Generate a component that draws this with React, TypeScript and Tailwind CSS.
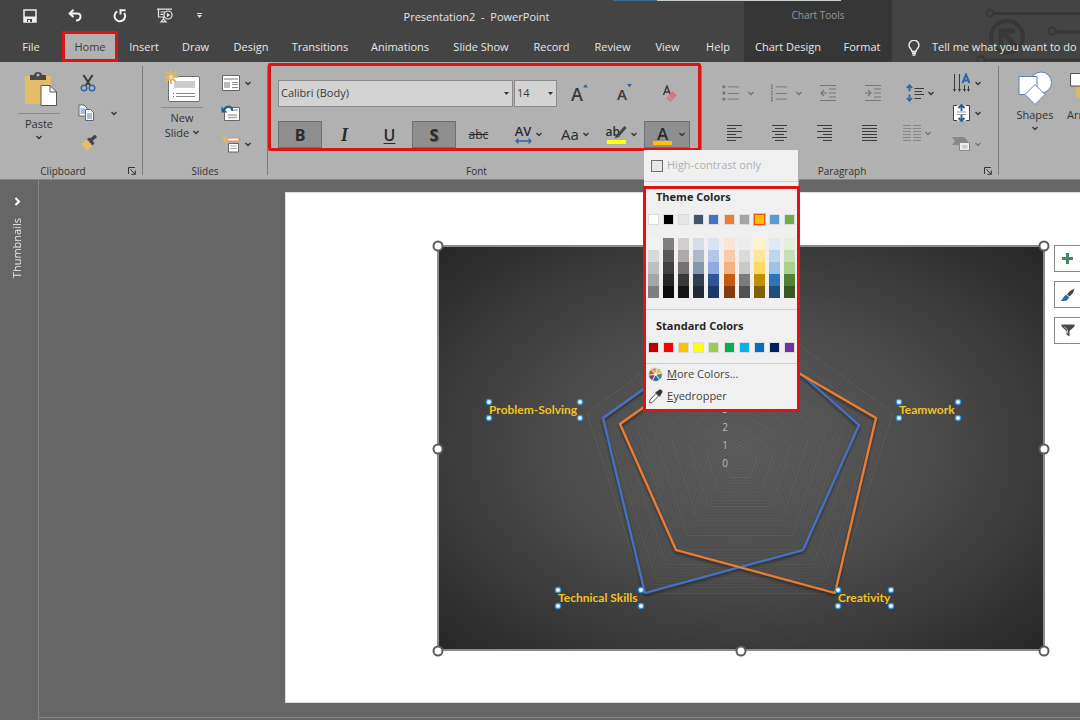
import React from "react";

const TABS = [
  { label: "File", width: "w-[62px]" },
  { label: "Home", width: "w-14" },
  { label: "Insert", width: "w-[52px]" },
  { label: "Draw", width: "w-[51px]" },
  { label: "Design", width: "w-[60px]" },
  { label: "Transitions", width: "w-[78px]" },
  { label: "Animations", width: "w-[82px]" },
  { label: "Slide Show", width: "w-20" },
  { label: "Record", width: "w-[61px]" },
  { label: "Review", width: "w-[61px]" },
  { label: "View", width: "w-[49px]" },
  { label: "Help", width: "w-[52px]" },
];

const THEME = ["#ffffff", "#000000", "#e7e6e6", "#44546a", "#4472c4", "#ed7d31", "#a5a5a5", "#ffc000", "#5b9bd5", "#70ad47"];

const SHADES = [
  ["#f2f2f2", "#d9d9d9", "#bfbfbf", "#a6a6a6", "#7f7f7f"],
  ["#7f7f7f", "#595959", "#404040", "#262626", "#0d0d0d"],
  ["#d0cece", "#aeaaaa", "#767171", "#3b3838", "#181717"],
  ["#d6dce5", "#adb9ca", "#8497b0", "#333f50", "#222a35"],
  ["#dae3f3", "#b4c7e7", "#8faadc", "#2f5597", "#203864"],
  ["#fbe5d6", "#f8cbad", "#f4b183", "#c55a11", "#843c0c"],
  ["#ededed", "#dbdbdb", "#c9c9c9", "#7c7c7c", "#525252"],
  ["#fff2cc", "#ffe699", "#ffd966", "#bf9000", "#7f6000"],
  ["#deebf7", "#bdd7ee", "#9dc3e6", "#2e75b6", "#1f4e79"],
  ["#e2f0d9", "#c5e0b4", "#a9d18e", "#548235", "#385723"],
];

const STANDARD = ["#c00000", "#ff0000", "#ffc000", "#ffff00", "#92d050", "#00b050", "#00b0f0", "#0070c0", "#002060", "#7030a0"];

function Chevron({ dim = false }: { dim?: boolean }) {
  return (
    <svg width="6" height="5" viewBox="0 0 6 5" className="shrink-0" aria-hidden="true">
      <path d="M0.5 1 L3 3.5 L5.5 1" fill="none" stroke={dim ? "#777" : "#333"} strokeWidth="1.3" />
    </svg>
  );
}

function Launcher({ name }: { name: string }) {
  return (
    <button aria-label={name} className="flex size-3 items-center justify-center">
      <svg width="8" height="8" viewBox="0 0 8 8" fill="none" stroke="#333" aria-hidden="true">
        <path d="M0.5 7V0.5H7M2.5 2.5L7 7M7.3 3.5V7.3H3.5" />
      </svg>
    </button>
  );
}

function Group({
  name,
  className,
  labelClassName = "",
  launcher,
  children,
}: {
  name: string;
  className: string;
  labelClassName?: string;
  launcher?: boolean;
  children: React.ReactNode;
}) {
  return (
    <section aria-label={name} className={`relative flex shrink-0 flex-col ${className}`}>
      <div className="h-[102px]">{children}</div>
      <div className="flex h-4 items-center text-[10px]">
        <span className={`flex-1 text-center ${labelClassName}`}>{name}</span>
        {launcher && (
          <span className="pr-1">
            <Launcher name={`${name} settings`} />
          </span>
        )}
      </div>
    </section>
  );
}

function Divider() {
  return <div className="mt-1 mb-1 w-px shrink-0 bg-[#7b7b7b]" />;
}

function IconButton({ name, className, children, arrow, dim }: { name: string; className: string; children?: React.ReactNode; arrow?: boolean; dim?: boolean }) {
  return (
    <button aria-label={name} className={`flex shrink-0 items-center justify-center gap-1 ${className}`}>
      {children}
      {arrow && <Chevron dim={dim} />}
    </button>
  );
}

function Header() {
  return (
    <header className="flex h-[62px] bg-[#444] text-[#e6e6e6]">
      <div className="relative flex shrink-0 flex-col">
        <div className="flex h-[31px] items-center pl-2">
          <IconButton name="Save" className="w-11">
            <svg width="14" height="14" viewBox="0 0 14 14" aria-hidden="true">
              <path d="M1 1H13V13H1Z" fill="none" stroke="#eee" strokeWidth="1.5" />
              <path d="M1 7.5H13V13H1Z" fill="#eee" />
              <path d="M4 10H9V13H4Z" fill="#444" />
              <path d="M5 11H7V13H5Z" fill="#eee" />
            </svg>
          </IconButton>
          <IconButton name="Undo" className="w-[46px]">
            <svg width="14" height="13" viewBox="0 0 14 13" fill="none" stroke="#f2f2f2" strokeWidth="2" aria-hidden="true">
              <path d="M5.5 0.8L1.6 4.4L5.5 8M2 4.4H9.2C14 4.4 13.6 11.2 8 11.6" />
            </svg>
          </IconButton>
          <IconButton name="Redo" className="w-[43px]">
            <svg width="14" height="14" viewBox="0 0 14 14" fill="none" stroke="#f2f2f2" strokeWidth="2" aria-hidden="true">
              <path d="M4.2 2.4A5.3 5.3 0 1 0 11.2 4M7.5 5.5V1.2H12.6" />
            </svg>
          </IconButton>
          <IconButton name="Start From Beginning" className="w-12">
            <svg width="16" height="15" viewBox="0 0 16 15" fill="none" stroke="#e4e4e4" strokeWidth="1.2" aria-hidden="true">
              <path d="M0 1.2H15M1.5 1.5V9H7M3.5 4H8M3.5 6.3H6.5M6.5 9V12M4 13.8L6.5 11L9 13.8Z" />
              <circle cx="11" cy="7" r="4" fill="#444" />
              <path d="M9.8 4.8L13.2 7L9.8 9.2Z" fill="#e4e4e4" stroke="none" />
            </svg>
          </IconButton>
          <IconButton name="Customize Quick Access Toolbar" className="w-5">
            <svg width="5" height="5" viewBox="0 0 5 5" fill="#ddd" aria-hidden="true">
              <path d="M0 0H5V1H0ZM0 2H5L2.5 5Z" />
            </svg>
          </IconButton>
          <h1 className="flex-1 pt-1 text-center">Presentation2&nbsp; -&nbsp; PowerPoint</h1>
        </div>
        <nav className="flex h-[31px]" aria-label="Ribbon tabs">
          {TABS.map((t) =>
            t.label === "Home" ? (
              <button key={t.label} className={`${t.width} border-[3px] border-[#dc1414] bg-[#b1b1b1] pt-[2px] text-[#3c3c3c]`}>
                {t.label}
              </button>
            ) : (
              <button key={t.label} className={`${t.width} pt-[2px]`}>
                {t.label}
              </button>
            )
          )}
        </nav>
      </div>
      <div className="flex shrink-0 flex-col bg-[#363636]">
        <div className="flex h-[31px] items-center justify-center text-[10px] text-[#969696]">Chart Tools</div>
        <nav className="flex h-[31px]" aria-label="Chart tabs">
          <button className="w-[88px] pt-[2px]">Chart Design</button>
          <button className="w-[60px] pt-[2px]">Format</button>
        </nav>
      </div>
      <div className="relative flex flex-1 items-end overflow-hidden">
        <svg className="absolute inset-y-0 left-[84px]" width="120" height="62" fill="none" stroke="#383838" aria-hidden="true">
          <circle cx="14" cy="13" r="3.5" strokeWidth="2" />
          <path d="M18 13.5H120M80 32H120M8 60H110" strokeWidth="3" />
          <circle cx="76" cy="31" r="3.5" strokeWidth="2" />
          <circle cx="31" cy="37" r="16" strokeWidth="4" />
          <path d="M25 45V31H39M26 32L40 46" strokeWidth="5" />
          <circle cx="5" cy="60" r="3.5" strokeWidth="2" />
        </svg>
        <button className="relative flex h-[31px] items-center gap-3 pt-[2px] pl-4 whitespace-nowrap">
          <svg width="12" height="16" viewBox="0 0 12 16" fill="none" stroke="#eee" strokeWidth="1.4" aria-hidden="true">
            <path d="M4 11.5C4 9 1 8.5 1 5.3A5 5 0 0 1 11 5.3C11 8.5 8 9 8 11.5ZM4 13.2H8M4.5 15H7.5" />
          </svg>
          Tell me what you want to do
        </button>
      </div>
    </header>
  );
}

function ClipboardGroup() {
  return (
    <Group name="Clipboard" className="w-[142px]" launcher>
      <div className="flex h-full">
        <button className="ml-[18px] flex w-[42px] flex-col items-center pt-[9px]">
          <svg className="ml-1" width="34" height="36" viewBox="0 0 34 36" aria-hidden="true">
            <path d="M1 5H27V33H1Z" fill="#e6bd67" />
            <path d="M6 9V4H10C10 0 18 0 18 4H22V9Z" fill="#484848" />
            <circle cx="14" cy="4" r="1.5" fill="#b1b1b1" />
            <path d="M17 14.5H26L32.5 21V34.5H17Z" fill="#fff" stroke="#555" />
            <path d="M26 14.5V21H32.5" fill="none" stroke="#555" />
          </svg>
          <span className="mt-[6px] h-px w-full bg-[#8a8a8a]" />
          <span className="mt-[2px] h-[15px] leading-[15px]">Paste</span>
          <span className="mt-1">
            <Chevron />
          </span>
        </button>
        <div className="ml-[14px] flex flex-col pt-[6px]">
          <IconButton name="Cut" className="h-[30px] w-7">
            <svg width="16" height="18" viewBox="0 0 16 18" fill="none" aria-hidden="true">
              <path d="M3.5 1L10.5 12M12.5 1L5.5 12" stroke="#3a3a3a" strokeWidth="2" />
              <circle cx="4" cy="14" r="2.8" stroke="#2f66a8" strokeWidth="1.4" />
              <circle cx="12" cy="14" r="2.8" stroke="#2f66a8" strokeWidth="1.4" />
            </svg>
          </IconButton>
          <div className="flex h-[30px] items-center">
            <IconButton name="Copy" className="w-6">
              <svg width="17" height="18" viewBox="0 0 17 18" aria-hidden="true">
                <path d="M1 1H6L9 4V12H1Z" fill="#fff" stroke="#666" />
                <path d="M2.5 5H7M2.5 7H7M2.5 9H7" stroke="#4a80bd" />
                <path d="M7.500 5.500H12.500L15.500 8.500V16.500H7.500Z" fill="#fff" stroke="#666" />
                <path d="M9 10H14M9 12H14M9 14H14" stroke="#4a80bd" />
              </svg>
            </IconButton>
            <IconButton name="Copy options" className="ml-1 w-6" arrow />
          </div>
          <IconButton name="Format Painter" className="h-[30px] w-[30px]">
            <svg width="18" height="16" viewBox="0 0 18 16" aria-hidden="true">
              <path d="M1 9L6 5L12 11L7 16Z" fill="#e6bd67" />
              <path d="M7 4L9.500 2.500L14.500 8L12.500 10.500Z" fill="#444" />
              <path d="M11 5L16 1" stroke="#444" strokeWidth="3.500" />
            </svg>
          </IconButton>
        </div>
      </div>
    </Group>
  );
}

function SlidesGroup() {
  return (
    <Group name="Slides" className="w-[124px]">
      <div className="flex h-full">
        <button className="ml-[18px] flex w-[42px] flex-col items-center pt-[8px]">
          <svg width="38" height="33" viewBox="0 0 38 33" aria-hidden="true">
            <rect x="5.500" y="6.500" width="31" height="25" rx="1.500" fill="#fff" stroke="#707070" />
            <path d="M11 11H32V18H11Z" fill="#ccc" />
            <path d="M13 23.500H32M13 26.500H32" stroke="#888" />
            <path d="M10 23.500H11M10 26.500H11" stroke="#666" />
            <path d="M8 0V14M1 7H15M3 2L13 12M13 2L3 12" stroke="#e0b868" strokeWidth="2" />
            <circle cx="8" cy="7" r="2" fill="#f3d9a0" />
          </svg>
          <span className="mt-1 h-px w-full bg-[#8a8a8a]" />
          <span className="mt-[2px] h-[15px] leading-[15px]">New</span>
          <span className="flex h-[15px] items-center gap-1 leading-[15px]">
            Slide <Chevron />
          </span>
        </button>
        <div className="ml-[18px] flex flex-col items-start pt-[6px]">
          <IconButton name="Layout" className="h-[30px]" arrow>
            <svg width="20" height="16" viewBox="0 0 20 16" aria-hidden="true">
              <path d="M1.500 0.500H18.500V15.500H1.500Z" fill="#fff" stroke="#666" />
              <path d="M3 3H17V5H3ZM3 7H9V13H3Z" fill="#bbb" />
              <path d="M11 7.500H17M11 9.500H17M11 12.500H17" stroke="#888" />
            </svg>
          </IconButton>
          <IconButton name="Reset" className="h-[30px]">
            <svg width="20" height="16" viewBox="0 0 20 16" aria-hidden="true">
              <path d="M3.500 2.500H18.500V15.500H3.500Z" fill="#fff" stroke="#666" />
              <path d="M7 10H16M7 12.500H16M13 5H17" stroke="#aaa" strokeWidth="1.500" />
              <path d="M3 5C6 0 11 1 11.500 6" fill="none" stroke="#245a96" strokeWidth="2.200" />
              <path d="M0.500 1.500V7.500H6.500Z" fill="#245a96" />
            </svg>
          </IconButton>
          <IconButton name="Section" className="h-8" arrow>
            <svg width="20" height="18" viewBox="0 0 20 18" aria-hidden="true">
              <path d="M6 3H18V6H6Z" fill="#fff" stroke="#e08a4a" />
              <path d="M7.500 8.500H17.500V17H7.500Z" fill="#fff" stroke="#666" />
              <path d="M9 11H16M9 13.500H16" stroke="#aaa" />
              <path d="M4 0V8M0 4H8M1 1L7 7M7 1L1 7" stroke="#e0b868" />
            </svg>
          </IconButton>
        </div>
      </div>
    </Group>
  );
}

function Swatch({ color, selected }: { color: string; selected?: boolean }) {
  return (
    <button
      aria-label={color}
      className={`size-[11px] border ${selected ? "border-[#e8501c] ring-1 ring-[#f0b090]" : "border-[#dcdcdc]"}`}
      style={{ backgroundColor: color }}
    />
  );
}

function ColorMenu() {
  return (
    <div className="absolute top-[29px] left-0 z-10 w-[154px] bg-[#f0f0f0] text-[#444] shadow-[1px_0_0_#aaa]">
      <label className="flex h-[31px] items-center gap-1 pl-[7px] whitespace-nowrap text-[#b0b0b0]">
        <input type="checkbox" disabled className="size-3 appearance-none border border-[#6f6f6f] bg-[#e8e8e8]" />
        High-contrast only
      </label>
      <div className="h-[5px] border-t border-[#cfcfcf]" />
      <div className="-mr-[2px] -ml-[1px] border-[3px] border-[#dc1414]">
        <h2 className="h-4 pl-[10px] text-[11px] leading-4 font-bold text-[#262626]">Theme Colors</h2>
        <div className="mt-[9px] flex justify-between px-[2px]">
          {THEME.map((c) => (
            <Swatch key={c} color={c} selected={c === "#ffc000"} />
          ))}
        </div>
        <div className="mt-[13px] flex justify-between px-[2px]">
          {SHADES.map((col) => (
            <div key={col[3]} className="flex w-[11px] flex-col">
              {col.map((c) => (
                <button key={c} aria-label={c} className="h-3" style={{ backgroundColor: c }} />
              ))}
            </div>
          ))}
        </div>
        <div className="mt-[11px] h-px bg-[#cfcfcf]" />
        <h2 className="mt-2 h-4 pl-[10px] text-[11px] leading-4 font-bold text-[#262626]">Standard Colors</h2>
        <div className="mt-2 flex justify-between px-[2px]">
          {STANDARD.map((c) => (
            <Swatch key={c} color={c} />
          ))}
        </div>
        <div className="mt-[10px] h-px bg-[#cfcfcf]" />
        <div className="flex h-[45px] flex-col">
          <button className="flex h-5 items-center gap-1 pl-[2px]">
            <svg width="15" height="15" viewBox="-8 -8 16 16" stroke="#f0f0f0" strokeWidth="0.800" aria-hidden="true">
              <path d="M0 0L-5 -5.500A7.400 7.400 0 0 1 2 -7.100Z" fill="#d8a060" />
              <path d="M0 0L2 -7.100A7.400 7.400 0 0 1 7.200 -1.500Z" fill="#e8b868" />
              <path d="M0 0L7.200 -1.500A7.400 7.400 0 0 1 4.500 5.900Z" fill="#3f8f78" />
              <path d="M0 0L4.500 5.900A7.400 7.400 0 0 1 -3.500 6.500Z" fill="#2c6aa8" />
              <path d="M0 0L-3.500 6.500A7.400 7.400 0 0 1 -7.400 0.500Z" fill="#8a3f4c" />
              <path d="M0 0L-7.400 0.500A7.400 7.400 0 0 1 -5 -5.500Z" fill="#c85a38" />
              <circle r="1.600" fill="#f0f0f0" stroke="none" />
            </svg>
            <span>
              <u>M</u>ore Colors...
            </span>
          </button>
          <button className="flex h-6 items-center gap-1 pl-[2px]">
            <svg width="15" height="15" viewBox="0 0 15 15" aria-hidden="true">
              <path d="M8 4.500L10.500 7L4 13.500L1.500 14L2 11Z" fill="#fff" stroke="#555" />
              <path d="M7 3L9 2.500L11 0.800C13 -0.500 15.500 2 14 4L12.500 6L12 8Z" fill="#333" />
            </svg>
            <span>
              <u>E</u>yedropper
            </span>
          </button>
        </div>
      </div>
    </div>
  );
}

function Combo({ label, value, className }: { label: string; value: string; className: string }) {
  return (
    <div className={`relative flex h-[27px] items-center ${className}`}>
      <select aria-label={label} className="h-full w-full appearance-none border border-[#8a8a8a] bg-[#d3d3d3] pl-[2px] text-[#3a3a3a]">
        <option>{value}</option>
      </select>
      <svg className="pointer-events-none absolute right-[4px]" width="5" height="3" viewBox="0 0 5 3" aria-hidden="true">
        <path d="M0 0H5L2.500 3Z" fill="#333" />
      </svg>
    </div>
  );
}

function FontGroup() {
  return (
    <Group name="Font" className="w-[433px]" labelClassName="pr-4">
      <div className="mt-[1px] flex h-[88px] flex-col rounded-[2px] border-[3px] border-[#dc1414] pt-[14px] pl-[7px]">
        <div className="flex h-[27px] shrink-0 items-center">
          <Combo label="Font name" value="Calibri (Body)" className="w-[235px]" />
          <Combo label="Font size" value="14" className="ml-px w-[43px]" />
          <IconButton name="Increase font size" className="w-[45px]">
            <span className="flex items-start text-[18px] leading-5 font-semibold text-[#3a3a3a]">
              A
              <svg width="5" height="4" viewBox="0 0 5 4" aria-hidden="true">
                <path d="M0 3.500L2.500 0L5 3.500Z" fill="#2f66a8" />
              </svg>
            </span>
          </IconButton>
          <IconButton name="Decrease font size" className="w-[45px]">
            <span className="flex items-start text-[15px] leading-5 font-semibold text-[#3a3a3a]">
              A
              <svg width="5" height="4" viewBox="0 0 5 4" aria-hidden="true">
                <path d="M0 0H5L2.500 3.500Z" fill="#2f66a8" />
              </svg>
            </span>
          </IconButton>
          <IconButton name="Clear formatting" className="w-[45px]">
            <svg width="16" height="18" viewBox="0 0 16 18" aria-hidden="true">
              <path d="M1.500 10L5 1L8.500 10M2.700 7H7.300" fill="none" stroke="#3a3a3a" strokeWidth="1.500" />
              <path d="M4 13L10.500 6L15 10L8.500 17Z" fill="#e0727f" />
              <path d="M6 11L10.500 15" stroke="#b1b1b1" />
            </svg>
          </IconButton>
        </div>
        <div className="mt-[14px] flex h-[27px] shrink-0 items-stretch text-[#2b2b2b]">
          <button className="w-11 border border-[#707070] bg-[#8f8f8f] text-[16px] leading-6 font-bold">B</button>
          <button className="w-[45px] font-['Liberation_Serif',serif] text-[18px] leading-6 font-bold italic">I</button>
          <button className="w-[45px] text-[16px] leading-6 font-semibold underline underline-offset-2">U</button>
          <button className="w-11 border border-[#707070] bg-[#8f8f8f] text-[16px] leading-6 font-bold text-shadow-[1px_1px_1px_#555]">S</button>
          <button className="w-[45px] text-[12px] font-medium line-through">abc</button>
          <IconButton name="Character spacing" className="ml-2 w-[38px]" arrow>
            <span className="flex flex-col items-center text-[13px] leading-[13px] font-semibold">
              AV
              <svg width="17" height="6" viewBox="0 0 17 6" fill="none" stroke="#2f66a8" strokeWidth="1.300" aria-hidden="true">
                <path d="M1 3H16M3.500 0.500L1 3L3.500 5.500M13.500 0.500L16 3L13.500 5.500" />
              </svg>
            </span>
          </IconButton>
          <IconButton name="Change case" className="ml-2 w-10" arrow>
            <span className="text-[15px]">Aa</span>
          </IconButton>
          <IconButton name="Text highlight color" className="ml-[7px] w-[38px]" arrow>
            <span className="relative flex flex-col items-center text-[12px] leading-[14px] font-semibold">
              <span className="h-[15px] w-[21px] text-left">ab</span>
              <span className="h-1 w-[19px] bg-[#ffff10]" />
              <svg className="absolute top-0 right-0" width="15" height="15" viewBox="0 0 15 15" aria-hidden="true">
                <path d="M13.500 2L6.500 10" stroke="#444" strokeWidth="3" />
                <path d="M5 8.500L8 11.500L2.500 13.500Z" fill="#444" />
              </svg>
            </span>
          </IconButton>
          <div className="relative ml-1 flex w-[46px]">
            <IconButton name="Font color" className="w-full gap-[7px] border border-[#707070] bg-[#8f8f8f] pl-1" arrow>
              <span className="flex flex-col items-center text-[17px] leading-[17px] font-semibold">
                <span className="h-4">A</span>
                <span className="h-1 w-[19px] bg-[#ffc000]" />
              </span>
            </IconButton>
            <ColorMenu />
          </div>
        </div>
      </div>
    </Group>
  );
}

function Lines({ d, color = "#3c3c3c" }: { d: string; color?: string }) {
  return (
    <svg width="18" height="18" viewBox="0 0 18 18" fill="none" stroke={color} strokeWidth="1.200" aria-hidden="true">
      <path d={d} />
    </svg>
  );
}

function ParagraphGroup() {
  return (
    <Group name="Paragraph" className="w-[296px]" launcher>
      <div className="flex h-full">
        <div className="flex w-[240px] flex-col pt-[16px]">
          <div className="flex h-[30px] items-center">
            <IconButton name="Bullets" className="ml-5 w-[32px] gap-[9px]" arrow dim>
              <svg width="18" height="18" viewBox="0 0 18 18" stroke="#777" aria-hidden="true">
                <path d="M6 2.500H18M6 9.500H18M6 15.500H18" />
                <path d="M0.500 2.500H3.500M0.500 9H3.500M0.500 15.500H3.500" strokeWidth="3" />
              </svg>
            </IconButton>
            <IconButton name="Numbering" className="ml-[16px] w-[32px] gap-[9px]" arrow dim>
              <svg width="18" height="18" viewBox="0 0 18 18" stroke="#777" aria-hidden="true">
                <path d="M6 2.500H18M6 9.500H18M6 15.500H18" />
                <path d="M2 0V5M2 6.500V11.500M2 13V18" strokeWidth="1.800" strokeDasharray="2 1" />
              </svg>
            </IconButton>
            <IconButton name="Decrease indent" className="ml-[14px] w-6">
              <Lines color="#777" d="M1 1.500H17M10 5H17M10 9H17M10 13H17M1 16.500H17M8 9H2M5 6L2 9L5 12" />
            </IconButton>
            <IconButton name="Increase indent" className="ml-[21px] w-6">
              <Lines color="#777" d="M1 1.500H17M10 5H17M10 9H17M10 13H17M1 16.500H17M1 9H7M4 6L7 9L4 12" />
            </IconButton>
            <IconButton name="Line spacing" className="ml-[20px] w-[30px]" arrow>
              <svg width="18" height="18" viewBox="0 0 18 18" fill="none" aria-hidden="true">
                <path d="M3.500 1V7.500M0.800 4L3.500 1.200L6.200 4M3.500 10.500V17M0.800 14L3.500 16.800L6.200 14" stroke="#2f66a8" strokeWidth="1.800" />
                <path d="M8.500 4.500H18M8.500 7.500H16M8.500 10.500H18M8.500 14.500H15" stroke="#3c3c3c" />
              </svg>
            </IconButton>
          </div>
          <div className="mt-[10px] flex h-[30px] items-center">
            <IconButton name="Align left" className="ml-[10px] w-[45px]">
              <Lines d="M1 1.500H16M1 4.500H10M1 7.500H16M1 10.500H10M1 13.500H16M1 16.500H10" />
            </IconButton>
            <IconButton name="Center" className="w-[45px]">
              <Lines d="M1 1.500H16M4 4.500H13M1 7.500H16M4 10.500H13M1 13.500H16M4 16.500H13" />
            </IconButton>
            <IconButton name="Align right" className="w-[45px]">
              <Lines d="M1 1.500H16M7 4.500H16M1 7.500H16M7 10.500H16M1 13.500H16M7 16.500H16" />
            </IconButton>
            <IconButton name="Justify" className="w-[45px]">
              <Lines d="M1 1.500H16M1 4.500H16M1 7.500H16M1 10.500H16M1 13.500H16M1 16.500H16" />
            </IconButton>
            <IconButton name="Columns" className="ml-[10px] w-[30px]" arrow dim>
              <Lines color="#888" d="M0 1.500H8M10 1.500H18M0 4.500H8M10 4.500H18M0 7.500H8M10 7.500H18M0 10.500H8M10 10.500H18M0 13.500H8M10 13.500H18M0 16.500H8M10 16.500H18" />
            </IconButton>
          </div>
        </div>
        <div className="ml-[10px] flex flex-col items-start pt-[6px]">
          <IconButton name="Text direction" className="h-[30px]" arrow>
            <svg width="19" height="20" viewBox="0 0 19 20" fill="none" aria-hidden="true">
              <path d="M2.500 1V18M7.500 1V18M12.500 12V18M16.500 13V18" stroke="#3c3c3c" />
              <path d="M1 16L2.500 19L4 16ZM6 16L7.500 19L9 16ZM11 16L12.500 19L14 16ZM15 16L16.500 19L18 16Z" fill="#3c3c3c" />
              <path d="M10.500 10L14 1.500L17.500 10M11.500 7.500H16.500" stroke="#2f66a8" strokeWidth="2" />
            </svg>
          </IconButton>
          <IconButton name="Align text" className="h-[30px]" arrow>
            <svg width="19" height="18" viewBox="0 0 19 18" fill="none" aria-hidden="true">
              <path d="M1.500 1.500H17.500V16.500H1.500Z" fill="#fff" />
              <path d="M5 1.500H1.500V16.500H5M14 1.500H17.500V16.500H14" stroke="#444" />
              <path d="M5 8H14M5 10.500H14" stroke="#999" />
              <path d="M9.500 0.500V7M6.500 4L9.500 1L12.500 4M9.500 11V17.500M6.500 14L9.500 17L12.500 14" stroke="#2b5c98" strokeWidth="1.900" />
            </svg>
          </IconButton>
          <IconButton name="Convert to SmartArt" className="h-8" arrow dim>
            <svg width="19" height="16" viewBox="0 0 19 16" aria-hidden="true">
              <path d="M0 1H12L16 5L12 9H0L3 5Z" fill="#888" />
              <path d="M7.500 6.500H17.500V14.500H7.500Z" fill="#eee" stroke="#888" />
              <path d="M10 9H15.500V12.500H10Z" fill="#ccc" />
            </svg>
          </IconButton>
        </div>
      </div>
    </Group>
  );
}

function DrawingGroup() {
  return (
    <section aria-label="Drawing" className="flex pt-[9px] pl-4">
      <button className="flex w-10 shrink-0 flex-col items-center">
        <svg width="36" height="36" viewBox="0 0 36 36" fill="#fff" stroke="#5d83b4" aria-hidden="true">
          <circle cx="24" cy="11.500" r="10.500" />
          <path d="M2 5.500H20V23.500H2Z" />
          <path d="M18 13.500L28 23.500L18 33.500L8 23.500Z" />
        </svg>
        <span className="h-[15px] leading-[15px]">Shapes</span>
        <span className="mt-1">
          <Chevron />
        </span>
      </button>
      <button className="ml-3 flex shrink-0 flex-col items-center">
        <svg width="34" height="36" viewBox="0 0 34 36" aria-hidden="true">
          <path d="M14 8H30V27H6V15H14Z" fill="#e0b868" />
          <path d="M0.500 2.500H15V15H0.500Z" fill="#fff" stroke="#555" />
          <path d="M18 20H32V33H18Z" fill="#fff" stroke="#555" />
        </svg>
        <span className="h-[15px] leading-[15px]">Arrange</span>
      </button>
    </section>
  );
}

const CX = 303;
const CY = 217;
const RINGS = Array.from({ length: 45 }, (_, i) => {
  const r = ((i + 1) * 161) / 45;
  return [0, 1, 2, 3, 4]
    .map((k) => {
      const a = (k * 2 * Math.PI) / 5;
      return `${(CX + r * Math.sin(a)).toFixed(1)},${(CY - r * Math.cos(a)).toFixed(1)}`;
    })
    .join(" ");
});

const LABELS = [
  { text: "Problem-Solving", x: 52, y: 164, w: 91 },
  { text: "Teamwork", x: 462, y: 164, w: 59 },
  { text: "Technical Skills", x: 121, y: 352, w: 83 },
  { text: "Creativity", x: 401, y: 352, w: 53 },
];

const HANDLES = [
  [1, 0], [304, 0], [607, 0], [1, 203], [607, 203], [1, 405], [304, 405], [607, 405],
];

function RadarChart() {
  return (
    <svg width="606" height="405" viewBox="0 0 606 405" className="shrink-0 overflow-visible" role="img" aria-label="Radar chart">
      <defs>
        <radialGradient id="plate" cx="50%" cy="50%" r="70%">
          <stop offset="0" stopColor="#595959" />
          <stop offset="0.450" stopColor="#4b4b4b" />
          <stop offset="1" stopColor="#272727" />
        </radialGradient>
        <filter id="drop" x="-10%" y="-10%" width="120%" height="120%">
          <feDropShadow dx="0" dy="2" stdDeviation="1.500" floodColor="#000" floodOpacity="0.500" />
        </filter>
      </defs>
      <rect x="1" y="0" width="606" height="404" fill="url(#plate)" stroke="#8c8c8c" strokeWidth="2" />
      <g fill="none" stroke="#fff">
        {RINGS.map((p, i) => (
          <polygon key={p} points={p} strokeWidth="0.700" opacity={i % 5 === 4 ? 0.1 : 0.06} />
        ))}
      </g>
      <g fill="#b8b8b8" className="text-[10px]" textAnchor="middle">
        <text x="288" y="167">3</text>
        <text x="288" y="185">2</text>
        <text x="288" y="203">1</text>
        <text x="288" y="221">0</text>
      </g>
      <g fill="none" strokeWidth="2.200" strokeLinejoin="round" filter="url(#drop)">
        <polygon points="303,74 422,179 366,304 208,347 166,172" stroke="#4472c4" />
        <polygon points="303,93 439,172 398,347 239,304 183,178" stroke="#ed7d31" />
      </g>
      {LABELS.map((l) => (
        <g key={l.text}>
          <text x={l.x} y={l.y + 4} fill="#f4c31c" className="font-['Lato','Open_Sans',sans-serif] text-[12px] font-bold [font-variant-ligatures:none]">
            {l.text}
          </text>
          {[[0, -8], [l.w, -8], [0, 8], [l.w, 8]].map(([dx, dy]) => (
            <circle key={`${dx},${dy}`} cx={l.x + dx} cy={l.y + dy} r="2.700" fill="#e4f4ff" stroke="#2c8fd6" strokeWidth="1.200" />
          ))}
        </g>
      ))}
      {HANDLES.map(([x, y]) => (
        <circle key={`${x},${y}`} cx={x} cy={y} r="4.500" fill="#fff" stroke="#5c5c5c" strokeWidth="2" />
      ))}
    </svg>
  );
}

function ChartButtons() {
  const box = "flex size-[27px] items-center justify-center border border-[#8a8a8a] bg-white";
  return (
    <div className="-mt-px ml-[11px] flex shrink-0 flex-col gap-[9px]">
      <button aria-label="Chart Elements" className={box}>
        <svg width="11" height="11" viewBox="0 0 11 11" aria-hidden="true">
          <path d="M4 0H7V4H11V7H7V11H4V7H0V4H4Z" fill="#3e8a66" />
        </svg>
      </button>
      <button aria-label="Chart Styles" className={box}>
        <svg width="15" height="14" viewBox="0 0 15 14" aria-hidden="true">
          <path d="M14.500 0.500L13 5L9.500 8.500L7 6.500L10 3Z" fill="#444" />
          <path d="M6.500 7L9 9C8.500 12.500 5 14 0.500 12.500C3.500 11.500 3 7.500 6.500 7Z" fill="#2c68a4" />
        </svg>
      </button>
      <button aria-label="Chart Filters" className={box}>
        <svg width="14" height="13" viewBox="0 0 14 13" aria-hidden="true">
          <path d="M0.500 0.500H13.500V2.500L8.500 7V12.500L5.500 10.500V7L0.500 2.500Z" fill="#4a4a4a" />
          <path d="M3 2.500L6.500 6V9.500" fill="none" stroke="#ccc" strokeWidth="0.900" />
        </svg>
      </button>
    </div>
  );
}

export default function App() {
  return (
    <div className="relative flex min-h-screen w-full flex-col overflow-hidden bg-[#666] font-['Open_Sans','Noto_Sans',sans-serif] text-[11px] text-[#333]">
      <div className="absolute top-0 left-[613px] z-10 flex h-px w-[228px]">
        <span className="w-11 bg-[#3a6a98]" />
        <span className="flex-1 bg-[#c8cccb]" />
      </div>
      <Header />
      <div className="flex h-[118px] border-b border-[#8a8a8a] bg-[#b1b1b1] text-[11px] whitespace-nowrap">
        <ClipboardGroup />
        <Divider />
        <SlidesGroup />
        <Divider />
        <FontGroup />
        <Divider />
        <ParagraphGroup />
        <Divider />
        <DrawingGroup />
      </div>
      <main className="flex flex-1">
        <aside className="flex w-[39px] shrink-0 flex-col items-center border-r border-[#858585] pt-[17px] pr-1 text-[#e6e6e6]">
          <button aria-label="Expand thumbnails">
            <svg width="7" height="9" viewBox="0 0 7 9" fill="none" stroke="#fff" strokeWidth="2" aria-hidden="true">
              <path d="M1.500 1L5 4.500L1.500 8" />
            </svg>
          </button>
          <span className="mt-3 rotate-180 [writing-mode:vertical-rl]">Thumbnails</span>
        </aside>
        <div className="mb-[2px] flex flex-1 flex-col border-b border-[#858585] pt-3 pb-[14px] pl-[246px]">
          <div className="flex min-w-0 flex-1 items-start border border-r-0 border-[#ddd] bg-white pt-[53px] pl-[151px]">
            <RadarChart />
            <ChartButtons />
          </div>
        </div>
      </main>
    </div>
  );
}
